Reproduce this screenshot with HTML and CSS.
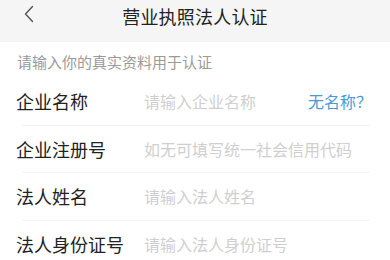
FILE: index.html
```html
<!DOCTYPE html>
<html lang="zh-CN">
<head>
<meta charset="utf-8">
<link rel="stylesheet" href="styles.css">
</head>
<body>
<div class="page">
  <header class="nav">
    <span class="back">
      <svg width="12" height="18" viewBox="0 0 12 18"><path d="M9.5 1.5 L2.5 9 L9.5 16.5" fill="none" stroke="#555" stroke-width="1.4" stroke-linecap="round" stroke-linejoin="round"/></svg>
    </span>
    <h1 class="title">营业执照法人认证</h1>
  </header>
  <main class="body">
    <p class="hint">请输入你的真实资料用于认证</p>
    <div class="row">
      <span class="label">企业名称</span>
      <span class="ph">请输入企业名称</span>
      <span class="link">无名称？</span>
    </div>
    <div class="row">
      <span class="label">企业注册号</span>
      <span class="ph">如无可填写统一社会信用代码</span>
    </div>
    <div class="row">
      <span class="label">法人姓名</span>
      <span class="ph">请输入法人姓名</span>
    </div>
    <div class="row last">
      <span class="label">法人身份证号</span>
      <span class="ph">请输入法人身份证号</span>
    </div>
  </main>
</div>
</body>
</html>
```
FILE: styles.css
```css
* { box-sizing: border-box; }
html, body { margin: 0; padding: 0; background: #fff; }
body { font-family: "Noto Sans CJK SC", "Noto Sans", sans-serif; }
.page { width: 390px; height: 260px; overflow: hidden; }
.nav {
  height: 42px;
  background: #f5f5f5;
  display: flex;
  align-items: center;
  justify-content: center;
  position: relative;
}
.back {
  position: absolute;
  left: 23px;
  top: 5px;
  display: flex;
}
.title {
  margin: 0;
  margin-top: -10px;
  font-size: 18px;
  font-weight: 400;
  color: #222;
  letter-spacing: 0.2px;
}
.body { background: #fff; }
.hint {
  margin: 0;
  height: 36px;
  padding: 9px 0 0 17px;
  font-size: 15px;
  line-height: 22px;
  color: #9a9a9a;
}
.row {
  display: flex;
  align-items: center;
  height: 47.5px;
  margin: 0 20px 0 22px;
  border-bottom: 1px solid #f2f2f2;
}
.row.last { border-bottom: none; }
.label {
  width: 128px;
  margin-left: -6px;
  flex: none;
  font-size: 18px;
  color: #222;
}
.ph {
  flex: 1;
  font-size: 16px;
  color: #cfcfcf;
  white-space: nowrap;
}
.link {
  font-size: 16px;
  color: #4a9ad6;
  margin-right: -2px;
}
```
